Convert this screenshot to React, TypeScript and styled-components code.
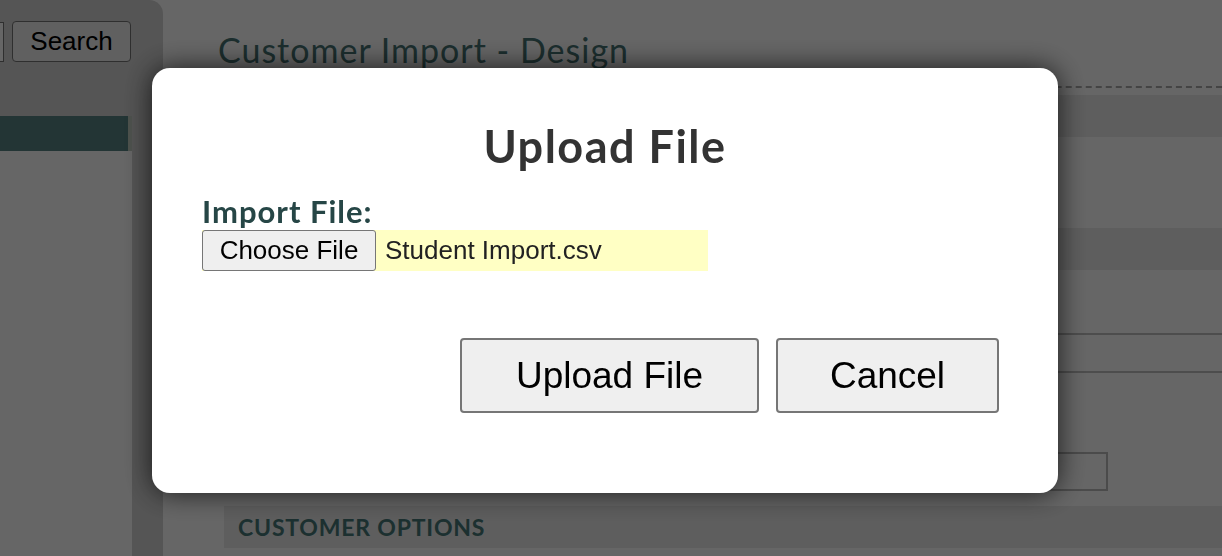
import React from "react";
import styled, { createGlobalStyle } from "styled-components";

const Global = createGlobalStyle`
  html, body { margin: 0; padding: 0; background: #ffffff; overflow: hidden; }
  body { font-family: "Liberation Sans", Arial, sans-serif; }
`;

const Page = styled.div`
  display: flex;
  width: 1222px;
  height: 556px;
  background: #ffffff;
`;

const Sidebar = styled.aside`
  width: 163px;
  flex: none;
  background: #d4d4d4;
  border-top-right-radius: 14px;
  display: flex;
  flex-direction: column;
`;

const SearchRow = styled.div`
  display: flex;
  align-items: center;
  gap: 8px;
  margin: 21px 0 0 -60px;
`;

const SearchInput = styled.div`
  width: 62px;
  height: 38px;
  border: 1px solid #767676;
  background: #ffffff;
`;

const SysButton = styled.button<{ $size?: number }>`
  font-family: "Liberation Sans", Arial, sans-serif;
  font-size: ${(p) => p.$size ?? 26}px;
  color: #000;
  background: #efefef;
  border: 1px solid #767676;
  border-radius: 4px;
  padding: 0;
  cursor: pointer;
`;

const SearchButton = styled(SysButton)`
  width: 119px;
  height: 41px;
`;

const NavPanel = styled.div`
  margin-top: 54px;
  width: 132px;
  flex: 1;
  background: #ffffff;
`;

const NavHeader = styled.div`
  height: 35px;
  width: 128px;
  background: #578585;
  border-right: 4px solid #c2cdc2;
  box-sizing: content-box;
`;

const Main = styled.main`
  flex: 1;
  padding-left: 61px;
  display: flex;
  flex-direction: column;
`;

const PageTitle = styled.h1`
  margin: 28px 0 0 -6px;
  font-family: "Lato", "Open Sans", sans-serif;
  font-weight: 400;
  font-size: 34px;
  letter-spacing: 1px;
  line-height: 44px;
  color: #467373;
`;

const Dashed = styled.div`
  margin-top: 14px;
  border-top: 2px dashed #aaaaaa;
`;

const Band = styled.div<{ $h: number; $mt: number }>`
  height: ${(p) => p.$h}px;
  margin-top: ${(p) => p.$mt}px;
  background: #ebebeb;
  display: flex;
  align-items: center;
  padding-left: 14px;
`;

const LineRow = styled.div`
  margin-top: 63px;
  height: 36px;
  border-top: 2px solid #c0c0c0;
  border-bottom: 2px solid #c0c0c0;
`;

const SmallInput = styled.div`
  margin-top: 79px;
  width: 880px;
  height: 35px;
  border: 2px solid #bbbbbb;
`;

const SectionTitle = styled.span`
  font-family: "Lato", "Open Sans", sans-serif;
  font-weight: 700;
  font-size: 23px;
  letter-spacing: 0.8px;
  color: #467878;
`;

const Overlay = styled.div`
  position: fixed;
  inset: 0;
  background: rgba(0, 0, 0, 0.6);
`;

const Modal = styled.div`
  position: absolute;
  left: 152px;
  top: 68px;
  width: 906px;
  height: 425px;
  box-sizing: border-box;
  background: #ffffff;
  border-radius: 18px;
  box-shadow: 0 0 28px rgba(0, 0, 0, 0.75);
  padding: 50px 59px 0 50px;
  display: flex;
  flex-direction: column;
`;

const ModalTitle = styled.h2`
  margin: 0;
  text-align: center;
  font-family: "Lato", "Open Sans", sans-serif;
  font-weight: 700;
  font-size: 45px;
  letter-spacing: 1.5px;
  line-height: 56px;
  color: #333333;
  padding-left: 9px;
`;

const FieldLabel = styled.label`
  margin-top: 20px;
  font-family: "Lato", "Open Sans", sans-serif;
  font-weight: 700;
  font-size: 31px;
  letter-spacing: 1px;
  line-height: 34px;
  color: #264646;
`;

const FileField = styled.div`
  margin-top: 2px;
  width: 506px;
  height: 41px;
  display: flex;
  align-items: center;
  background: #ffffc4;
`;

const ChooseButton = styled(SysButton)`
  width: 174px;
  height: 41px;
  border-radius: 3px;
`;

const FileName = styled.span`
  margin-left: 9px;
  font-family: "Liberation Sans", Arial, sans-serif;
  font-size: 26px;
  color: #222222;
`;

const Actions = styled.div`
  margin-top: 67px;
  display: flex;
  justify-content: flex-end;
  gap: 17px;
`;

const DialogButton = styled(SysButton)<{ $w: number }>`
  width: ${(p) => p.$w}px;
  height: 75px;
  border: 2px solid #767676;
  border-radius: 4px;
`;

export default function App() {
  return (
    <>
      <Global />
      <Page>
        <Sidebar>
          <SearchRow>
            <SearchInput />
            <SearchButton>Search</SearchButton>
          </SearchRow>
          <NavPanel>
            <NavHeader />
          </NavPanel>
        </Sidebar>
        <Main>
          <PageTitle>Customer Import - Design</PageTitle>
          <Dashed />
          <Band $h={42} $mt={7} />
          <Band $h={42} $mt={91} />
          <LineRow />
          <SmallInput />
          <Band $h={42} $mt={15}>
            <SectionTitle>CUSTOMER OPTIONS</SectionTitle>
          </Band>
        </Main>
      </Page>
      <Overlay>
        <Modal>
          <ModalTitle>Upload File</ModalTitle>
          <FieldLabel>Import File:</FieldLabel>
          <FileField>
            <ChooseButton $size={26}>Choose File</ChooseButton>
            <FileName>Student Import.csv</FileName>
          </FileField>
          <Actions>
            <DialogButton $w={299} $size={37}>Upload File</DialogButton>
            <DialogButton $w={223} $size={37}>Cancel</DialogButton>
          </Actions>
        </Modal>
      </Overlay>
    </>
  );
}
